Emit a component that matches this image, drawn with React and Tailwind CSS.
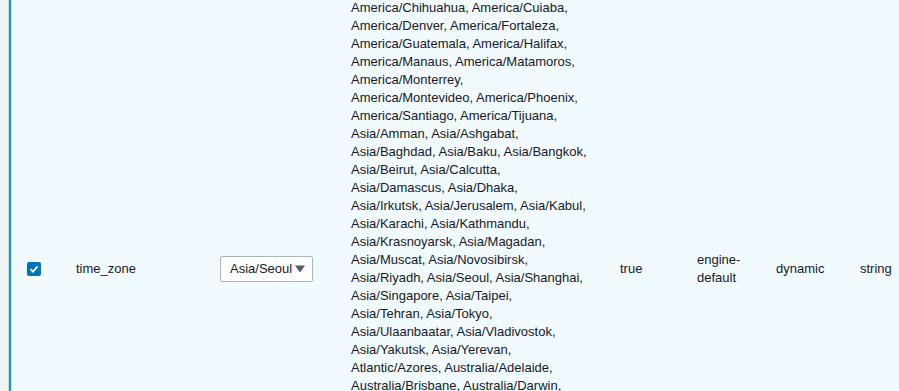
import React from "react";

const zones = [
  "America/Chihuahua, America/Cuiaba,",
  "America/Denver, America/Fortaleza,",
  "America/Guatemala, America/Halifax,",
  "America/Manaus, America/Matamoros,",
  "America/Monterrey,",
  "America/Montevideo, America/Phoenix,",
  "America/Santiago, America/Tijuana,",
  "Asia/Amman, Asia/Ashgabat,",
  "Asia/Baghdad, Asia/Baku, Asia/Bangkok,",
  "Asia/Beirut, Asia/Calcutta,",
  "Asia/Damascus, Asia/Dhaka,",
  "Asia/Irkutsk, Asia/Jerusalem, Asia/Kabul,",
  "Asia/Karachi, Asia/Kathmandu,",
  "Asia/Krasnoyarsk, Asia/Magadan,",
  "Asia/Muscat, Asia/Novosibirsk,",
  "Asia/Riyadh, Asia/Seoul, Asia/Shanghai,",
  "Asia/Singapore, Asia/Taipei,",
  "Asia/Tehran, Asia/Tokyo,",
  "Asia/Ulaanbaatar, Asia/Vladivostok,",
  "Asia/Yakutsk, Asia/Yerevan,",
  "Atlantic/Azores, Australia/Adelaide,",
  "Australia/Brisbane, Australia/Darwin,",
  "Australia/Hobart, Australia/Perth,",
  "Australia/Sydney, Brazil/East,",
  "Canada/Newfoundland,",
  "Canada/Saskatchewan,",
  "Europe/Amsterdam, Europe/Athens,",
  "Europe/Dublin, Europe/Helsinki,",
  "Europe/Istanbul,",
  "Europe/Kaliningrad,",
];

const Checkbox = () => (
  <div className="w-[14px] h-[14px] rounded-[2px] bg-[#0073bb] flex items-center justify-center">
    <svg width="10" height="10" viewBox="0 0 10 10" fill="none">
      <path d="M1.5 5.2 L4 7.6 L8.6 2.4" stroke="white" strokeWidth="1.8" />
    </svg>
  </div>
);

export default function App() {
  return (
    <div className="w-[899px] h-[391px] overflow-hidden flex bg-[#f1faff] font-['Liberation_Sans',sans-serif] text-[13px] leading-[18px] text-[#16191f]">
      {/* left gutter */}
      <div className="w-[9px] shrink-0 bg-[#f2f3f3] border-r border-[#d5dbdb]" />

      <div className="flex-1 border-l-2 border-[#00a1c9] overflow-hidden">
        <div className="flex items-center mt-[-1px]">
          <div className="w-[65px] shrink-0 pl-[16px]">
            <Checkbox />
          </div>
          <div className="w-[143px] shrink-0">time_zone</div>
          <div className="w-[132px] shrink-0 pl-[1px]">
            <div className="w-[93px] h-[26px] border border-[#aab7b8] rounded-[2px] bg-white flex items-center pl-[9px] gap-[3px]">
              <span>Asia/Seoul</span>
              <svg width="10" height="8" viewBox="0 0 10 8">
                <path d="M0 0.5 H10 L5 7.5 Z" fill="#545b64" />
              </svg>
            </div>
          </div>
          <div className="w-[269px] shrink-0">
            {zones.map((z) => (
              <div key={z} className="whitespace-nowrap">
                {z}
              </div>
            ))}
          </div>
          <div className="w-[77px] shrink-0">true</div>
          <div className="w-[79px] shrink-0">
            engine-
            <br />
            default
          </div>
          <div className="w-[84px] shrink-0">dynamic</div>
          <div className="flex-1">string</div>
        </div>
      </div>
    </div>
  );
}
